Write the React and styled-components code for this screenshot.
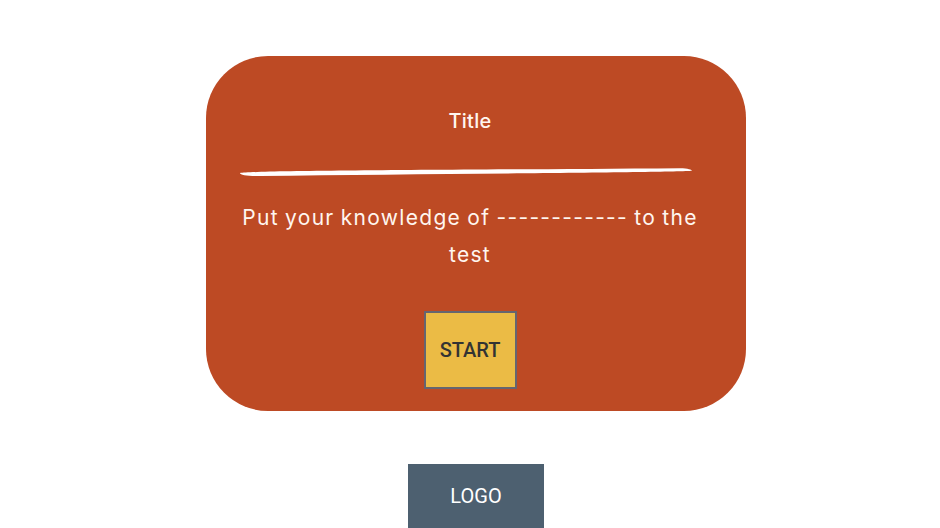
import styled, { createGlobalStyle } from "styled-components";

const GlobalStyle = createGlobalStyle`
  body {
    margin: 0;
    background: #ffffff;
    font-family: "Inter", "Noto Sans", sans-serif;
  }
`;

export default function App() {
  return (
    <>
      <GlobalStyle />
      <Page>
        <QuizCard>
          <Title>Title</Title>
          <Stroke width="460" height="12" viewBox="0 0 460 12">
            <path
              d="M4 7 C 20 4.5, 200 4, 444 2.2 C 452 2.2, 456 3.8, 456 4.8 C 440 6.5, 200 7.8, 24 10 C 12 10.2, 4 9, 4 7 Z"
              fill="#ffffff"
            />
          </Stroke>
          <Intro>Put your knowledge of ------------ to the test</Intro>
          <StartButton>START</StartButton>
        </QuizCard>
        <Logo>LOGO</Logo>
      </Page>
    </>
  );
}

const Page = styled.div`
  display: flex;
  flex-direction: column;
  align-items: center;
  padding: 56px 0 0 12px;
  height: 528px;
  box-sizing: border-box;
  overflow: hidden;
`;

const QuizCard = styled.section`
  width: 540px;
  height: 357px;
  box-sizing: border-box;
  background: #bd4a24;
  border-radius: 62px;
  display: flex;
  flex-direction: column;
  align-items: center;
  padding: 53px 12px 0 0;
  color: #fff6ef;
`;

const Title = styled.h1`
  margin: 0;
  font-size: 20px;
  line-height: 24px;
  font-weight: 500;
  letter-spacing: 0.3px;
`;

const Stroke = styled.svg`
  display: block;
  margin-top: 33px;
  margin-left: -8px;
`;

const Intro = styled.p`
  margin: 21px 0 0;
  width: 480px;
  text-align: center;
  font-size: 21px;
  line-height: 37px;
  font-weight: 400;
  letter-spacing: 1.3px;
  word-spacing: -1px;
`;

const StartButton = styled.button`
  margin-top: 38px;
  width: 93px;
  height: 78px;
  background: #ebbb45;
  border: 2px solid #656570;
  color: #333333;
  font-family: "Roboto", sans-serif;
  font-size: 20px;
  font-weight: 500;
  cursor: pointer;
`;

const Logo = styled.div`
  margin-top: 53px;
  width: 136px;
  height: 64px;
  background: #4d6070;
  color: #ffffff;
  font-family: "Roboto", sans-serif;
  font-size: 20px;
  display: flex;
  align-items: center;
  justify-content: center;
`;
